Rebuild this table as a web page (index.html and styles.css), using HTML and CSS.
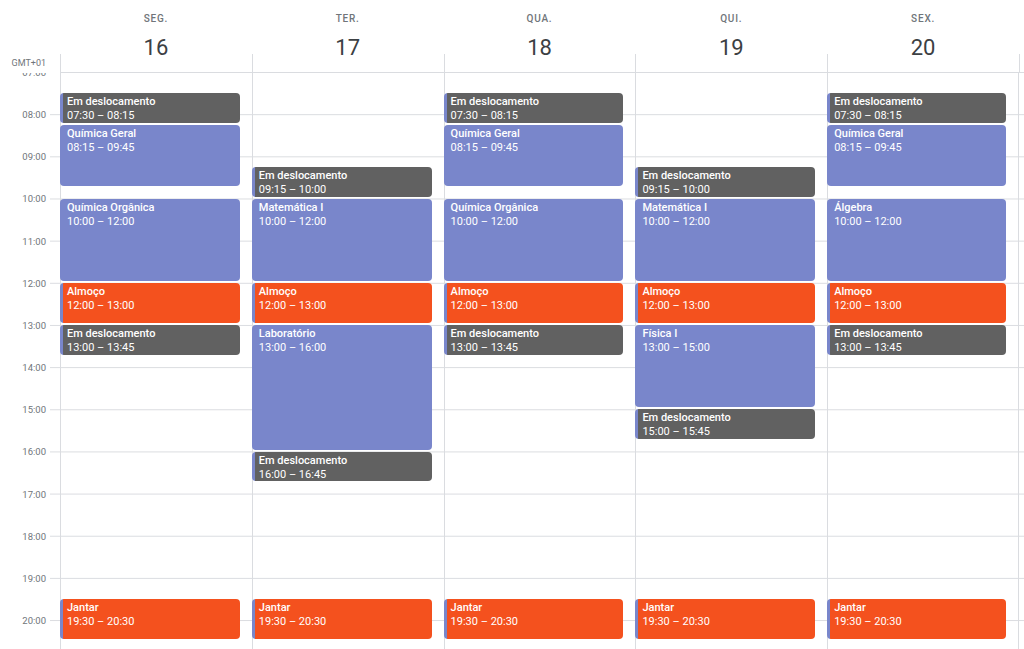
FILE: index.html
```html
<!DOCTYPE html>
<html lang="pt">
<head>
<meta charset="utf-8">
<title>Calendário</title>
<link rel="stylesheet" href="styles.css">
</head>
<body>
<div class="cal">
  <div class="head">
    <div class="tz">GMT+01</div>
    <div class="dhead"><div class="dow">SEG.</div><div class="num">16</div></div>
    <div class="dhead"><div class="dow">TER.</div><div class="num">17</div></div>
    <div class="dhead"><div class="dow">QUA.</div><div class="num">18</div></div>
    <div class="dhead"><div class="dow">QUI.</div><div class="num">19</div></div>
    <div class="dhead"><div class="dow">SEX.</div><div class="num">20</div></div>
  </div>
  <div class="body">
    <div class="gutter">
      <div class="hr"><span>07:00</span></div>
      <div class="hr"><span>08:00</span></div>
      <div class="hr"><span>09:00</span></div>
      <div class="hr"><span>10:00</span></div>
      <div class="hr"><span>11:00</span></div>
      <div class="hr"><span>12:00</span></div>
      <div class="hr"><span>13:00</span></div>
      <div class="hr"><span>14:00</span></div>
      <div class="hr"><span>15:00</span></div>
      <div class="hr"><span>16:00</span></div>
      <div class="hr"><span>17:00</span></div>
      <div class="hr"><span>18:00</span></div>
      <div class="hr"><span>19:00</span></div>
      <div class="hr"><span>20:00</span></div>
    </div>
    <div class="grid">
      <div class="col">
        <div class="ev gray" style="--s:0.5;--d:0.75"><b>Em deslocamento</b><span>07:30 – 08:15</span></div>
        <div class="ev blue" style="--s:1.25;--d:1.5"><b>Química Geral</b><span>08:15 – 09:45</span></div>
        <div class="ev blue" style="--s:3;--d:2"><b>Química Orgânica</b><span>10:00 – 12:00</span></div>
        <div class="ev orange" style="--s:5;--d:1"><b>Almoço</b><span>12:00 – 13:00</span></div>
        <div class="ev gray" style="--s:6;--d:0.75"><b>Em deslocamento</b><span>13:00 – 13:45</span></div>
        <div class="ev orange" style="--s:12.5;--d:1"><b>Jantar</b><span>19:30 – 20:30</span></div>
      </div>
      <div class="col">
        <div class="ev gray" style="--s:2.25;--d:0.75"><b>Em deslocamento</b><span>09:15 – 10:00</span></div>
        <div class="ev blue" style="--s:3;--d:2"><b>Matemática I</b><span>10:00 – 12:00</span></div>
        <div class="ev orange" style="--s:5;--d:1"><b>Almoço</b><span>12:00 – 13:00</span></div>
        <div class="ev blue" style="--s:6;--d:3"><b>Laboratório</b><span>13:00 – 16:00</span></div>
        <div class="ev gray" style="--s:9;--d:0.75"><b>Em deslocamento</b><span>16:00 – 16:45</span></div>
        <div class="ev orange" style="--s:12.5;--d:1"><b>Jantar</b><span>19:30 – 20:30</span></div>
      </div>
      <div class="col">
        <div class="ev gray" style="--s:0.5;--d:0.75"><b>Em deslocamento</b><span>07:30 – 08:15</span></div>
        <div class="ev blue" style="--s:1.25;--d:1.5"><b>Química Geral</b><span>08:15 – 09:45</span></div>
        <div class="ev blue" style="--s:3;--d:2"><b>Química Orgânica</b><span>10:00 – 12:00</span></div>
        <div class="ev orange" style="--s:5;--d:1"><b>Almoço</b><span>12:00 – 13:00</span></div>
        <div class="ev gray" style="--s:6;--d:0.75"><b>Em deslocamento</b><span>13:00 – 13:45</span></div>
        <div class="ev orange" style="--s:12.5;--d:1"><b>Jantar</b><span>19:30 – 20:30</span></div>
      </div>
      <div class="col">
        <div class="ev gray" style="--s:2.25;--d:0.75"><b>Em deslocamento</b><span>09:15 – 10:00</span></div>
        <div class="ev blue" style="--s:3;--d:2"><b>Matemática I</b><span>10:00 – 12:00</span></div>
        <div class="ev orange" style="--s:5;--d:1"><b>Almoço</b><span>12:00 – 13:00</span></div>
        <div class="ev blue" style="--s:6;--d:2"><b>Física I</b><span>13:00 – 15:00</span></div>
        <div class="ev gray" style="--s:8;--d:0.75"><b>Em deslocamento</b><span>15:00 – 15:45</span></div>
        <div class="ev orange" style="--s:12.5;--d:1"><b>Jantar</b><span>19:30 – 20:30</span></div>
      </div>
      <div class="col">
        <div class="ev gray" style="--s:0.5;--d:0.75"><b>Em deslocamento</b><span>07:30 – 08:15</span></div>
        <div class="ev blue" style="--s:1.25;--d:1.5"><b>Química Geral</b><span>08:15 – 09:45</span></div>
        <div class="ev blue" style="--s:3;--d:2"><b>Álgebra</b><span>10:00 – 12:00</span></div>
        <div class="ev orange" style="--s:5;--d:1"><b>Almoço</b><span>12:00 – 13:00</span></div>
        <div class="ev gray" style="--s:6;--d:0.75"><b>Em deslocamento</b><span>13:00 – 13:45</span></div>
        <div class="ev orange" style="--s:12.5;--d:1"><b>Jantar</b><span>19:30 – 20:30</span></div>
      </div>
    </div>
  </div>
</div>
</body>
</html>
```

FILE: styles.css
```css
* { box-sizing: border-box; }
html, body { margin: 0; padding: 0; background: #fff; }
body {
  font-family: Roboto, "Liberation Sans", Arial, sans-serif;
  color: #3c4043;
  overflow: hidden;
}
.cal {
  --h: 42.17px;
  width: 1024px;
  height: 649px;
  display: flex;
  flex-direction: column;
}
.head {
  display: grid;
  grid-template-columns: 60px repeat(5, 191.8px) 1fr;
  height: 73px;
  flex: none;
}
.tz {
  align-self: end;
  font-size: 9px;
  color: #70757a;
  text-align: right;
  padding-right: 14px;
  padding-bottom: 5px;
}
.dhead {
  position: relative;
  display: flex;
  flex-direction: column;
  align-items: center;
  border-bottom: 1px solid #dadce0;
}
.dhead::before {
  content: "";
  position: absolute;
  left: 0;
  bottom: -1px;
  width: 1px;
  height: 19px;
  background: #dadce0;
}
.dhead:nth-child(6)::after {
  content: "";
  position: absolute;
  right: -1px;
  bottom: -1px;
  width: 1px;
  height: 19px;
  background: #dadce0;
}
.head::after {
  content: "";
  border-bottom: 1px solid #dadce0;
}
.dow {
  margin-top: 12px;
  font-size: 10px;
  line-height: 14px;
  font-weight: 500;
  letter-spacing: 0.8px;
  color: #70757a;
}
.num {
  margin-top: 8px;
  font-size: 22px;
  line-height: 28px;
  color: #3c4043;
}
.body {
  flex: 1;
  display: flex;
  overflow: hidden;
}
.gutter {
  width: 50px;
  flex: none;
  margin-top: -7px;
}
.hr {
  height: var(--h);
  font-size: 9.5px;
  line-height: 14px;
  color: #70757a;
  text-align: right;
  padding-right: 4px;
}
.grid {
  flex: 1;
  display: flex;
  padding-left: 10px;
  background-image: linear-gradient(to top, #dadce0 1px, transparent 1px);
  background-size: 100% var(--h);
  background-position: 0 0;
  background-repeat: repeat-y;
  align-self: flex-start;
  height: calc(var(--h) * 14);
}
.col {
  position: relative;
  width: 191.8px;
  flex: none;
  border-left: 1px solid #dadce0;
}
.col:last-child { border-right: 1px solid #dadce0; }
.ev {
  position: absolute;
  left: -1px;
  width: calc(100% - 11px);
  top: calc(var(--s) * var(--h) - 1px);
  height: calc(var(--d) * var(--h) - 2px);
  border-radius: 4px;
  padding: 2px 4px 0 7px;
  color: #fff;
  font-size: 11px;
  line-height: 14px;
  display: flex;
  flex-direction: column;
  overflow: hidden;
  white-space: nowrap;
}
.ev b { font-weight: 500; }
.ev span { font-weight: 400; }
.gray { background: linear-gradient(to right, #7986cb 3px, #616161 3px); }
.blue { background: #7986cb; }
.orange { background: linear-gradient(to right, #7986cb 3px, #f4511e 3px); }
```
